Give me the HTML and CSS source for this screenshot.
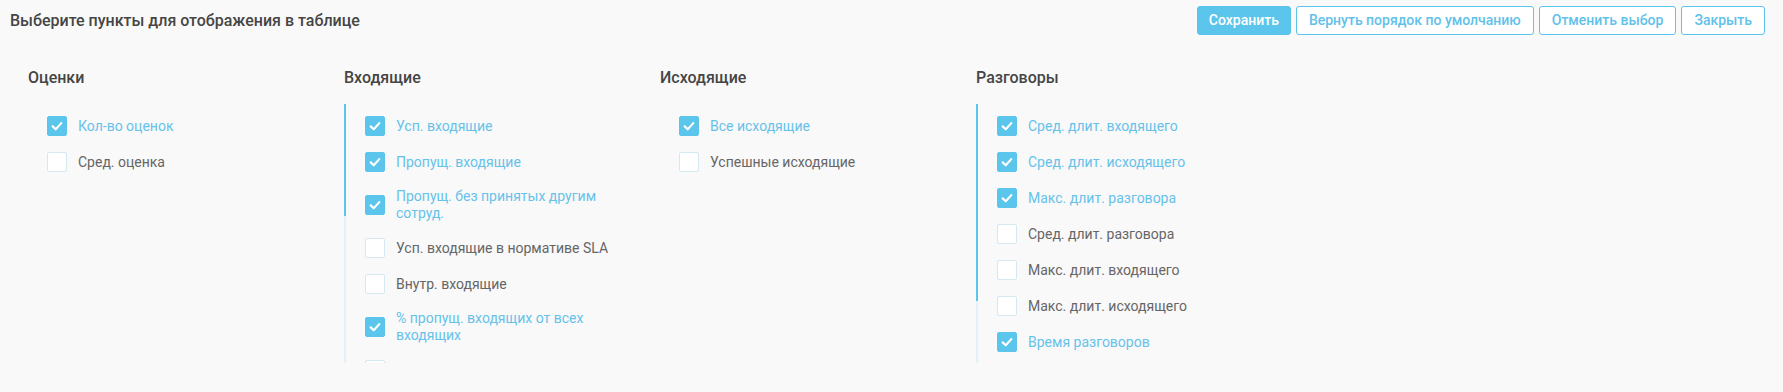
FILE: index.html
```html
<!DOCTYPE html>
<html lang="ru">
<head>
<meta charset="utf-8">
<title>Выберите пункты</title>
<link rel="stylesheet" href="styles.css">
</head>
<body>
<div class="topbar">
  <div class="title">Выберите пункты для отображения в таблице</div>
  <div class="actions">
    <button class="btn btn-primary">Сохранить</button>
    <button class="btn btn-outline">Вернуть порядок по умолчанию</button>
    <button class="btn btn-outline">Отменить выбор</button>
    <button class="btn btn-outline">Закрыть</button>
  </div>
</div>

<div class="columns">
  <section class="col">
    <h3 class="col-title">Оценки</h3>
    <div class="list">
      <label class="item on"><span class="box"><svg viewBox="0 0 20 20"><path d="M5.2 10.4 L8.6 13.6 L14.8 6.8"/></svg></span><span class="txt">Кол-во оценок</span></label>
      <label class="item"><span class="box"></span><span class="txt">Сред. оценка</span></label>
    </div>
  </section>

  <section class="col">
    <h3 class="col-title">Входящие</h3>
    <div class="list scroll">
      <span class="track"></span>
      <span class="thumb thumb-in"></span>
      <label class="item on"><span class="box"><svg viewBox="0 0 20 20"><path d="M5.2 10.4 L8.6 13.6 L14.8 6.8"/></svg></span><span class="txt">Усп. входящие</span></label>
      <label class="item on"><span class="box"><svg viewBox="0 0 20 20"><path d="M5.2 10.4 L8.6 13.6 L14.8 6.8"/></svg></span><span class="txt">Пропущ. входящие</span></label>
      <label class="item on"><span class="box"><svg viewBox="0 0 20 20"><path d="M5.2 10.4 L8.6 13.6 L14.8 6.8"/></svg></span><span class="txt">Пропущ. без принятых другим сотруд.</span></label>
      <label class="item"><span class="box"></span><span class="txt">Усп. входящие в нормативе SLA</span></label>
      <label class="item"><span class="box"></span><span class="txt">Внутр. входящие</span></label>
      <label class="item on"><span class="box"><svg viewBox="0 0 20 20"><path d="M5.2 10.4 L8.6 13.6 L14.8 6.8"/></svg></span><span class="txt">% пропущ. входящих от всех входящих</span></label>
      <label class="item"><span class="box"></span></label>
    </div>
  </section>

  <section class="col">
    <h3 class="col-title">Исходящие</h3>
    <div class="list">
      <label class="item on"><span class="box"><svg viewBox="0 0 20 20"><path d="M5.2 10.4 L8.6 13.6 L14.8 6.8"/></svg></span><span class="txt">Все исходящие</span></label>
      <label class="item"><span class="box"></span><span class="txt">Успешные исходящие</span></label>
    </div>
  </section>

  <section class="col">
    <h3 class="col-title">Разговоры</h3>
    <div class="list scroll">
      <span class="track"></span>
      <span class="thumb thumb-talk"></span>
      <label class="item on"><span class="box"><svg viewBox="0 0 20 20"><path d="M5.2 10.4 L8.6 13.6 L14.8 6.8"/></svg></span><span class="txt">Сред. длит. входящего</span></label>
      <label class="item on"><span class="box"><svg viewBox="0 0 20 20"><path d="M5.2 10.4 L8.6 13.6 L14.8 6.8"/></svg></span><span class="txt">Сред. длит. исходящего</span></label>
      <label class="item on"><span class="box"><svg viewBox="0 0 20 20"><path d="M5.2 10.4 L8.6 13.6 L14.8 6.8"/></svg></span><span class="txt">Макс. длит. разговора</span></label>
      <label class="item"><span class="box"></span><span class="txt">Сред. длит. разговора</span></label>
      <label class="item"><span class="box"></span><span class="txt">Макс. длит. входящего</span></label>
      <label class="item"><span class="box"></span><span class="txt">Макс. длит. исходящего</span></label>
      <label class="item on"><span class="box"><svg viewBox="0 0 20 20"><path d="M5.2 10.4 L8.6 13.6 L14.8 6.8"/></svg></span><span class="txt">Время разговоров</span></label>
    </div>
  </section>
</div>
</body>
</html>
```

FILE: styles.css
```css
* { box-sizing: border-box; }

html, body {
  margin: 0;
  padding: 0;
  background: #f9f9f9;
  font-family: Roboto, "Noto Sans", sans-serif;
  height: 392px;
  overflow: hidden;
}

.topbar {
  display: flex;
  justify-content: space-between;
  align-items: center;
  padding: 6px 18px 0 10px;
}

.title {
  font-size: 16px;
  font-weight: 500;
  color: #454545;
  line-height: 29px;
}

.actions {
  display: flex;
  gap: 5px;
}

.btn {
  height: 29px;
  padding: 0 12px;
  font-family: Roboto, "Noto Sans", sans-serif;
  font-size: 14px;
  font-weight: 500;
  border-radius: 3px;
  border: 1px solid #5bc5ec;
  cursor: pointer;
  line-height: 27px;
}

.btn-primary {
  background: #5bc5ec;
  color: #fff;
  padding: 0 11px;
}

.btn-outline {
  background: #fff;
  color: #62c1ea;
  padding: 0 12px;
}

.columns {
  display: grid;
  grid-template-columns: repeat(4, 296px);
  column-gap: 20px;
  padding-left: 28px;
  margin-top: 33px;
}

.col-title {
  margin: 0;
  font-size: 16px;
  font-weight: 500;
  color: #454545;
  line-height: 20px;
}

.list {
  margin-top: 16px;
  padding: 4px 0 0 19px;
  height: 259px;
  overflow: hidden;
}

.list.scroll {
  position: relative;
  padding-left: 21px;
}

.track,
.thumb {
  position: absolute;
  left: 0;
  top: 0;
  width: 2px;
}

.track {
  height: 100%;
  background: #e2f2fa;
}

.thumb { background: #5bc5ec; }

.thumb-in { height: 112px; }
.thumb-talk { height: 197px; }

.item {
  display: flex;
  align-items: center;
  gap: 11px;
  padding: 8px 0;
  font-size: 14px;
  line-height: 17px;
  color: #666;
  cursor: pointer;
}

.box {
  flex: none;
  width: 20px;
  height: 20px;
  border-radius: 2px;
  background: #fff;
  border: 1px solid #d6e8f1;
  display: flex;
  align-items: center;
  justify-content: center;
}

.box svg {
  width: 20px;
  height: 20px;
  fill: none;
  stroke: #fff;
  stroke-width: 2.4;
  stroke-linecap: round;
  stroke-linejoin: round;
}

.item.on { color: #66c2ea; }

.item.on .box {
  background: #5bc5ec;
  border-color: #5bc5ec;
}

.txt { max-width: 244px; }
```
